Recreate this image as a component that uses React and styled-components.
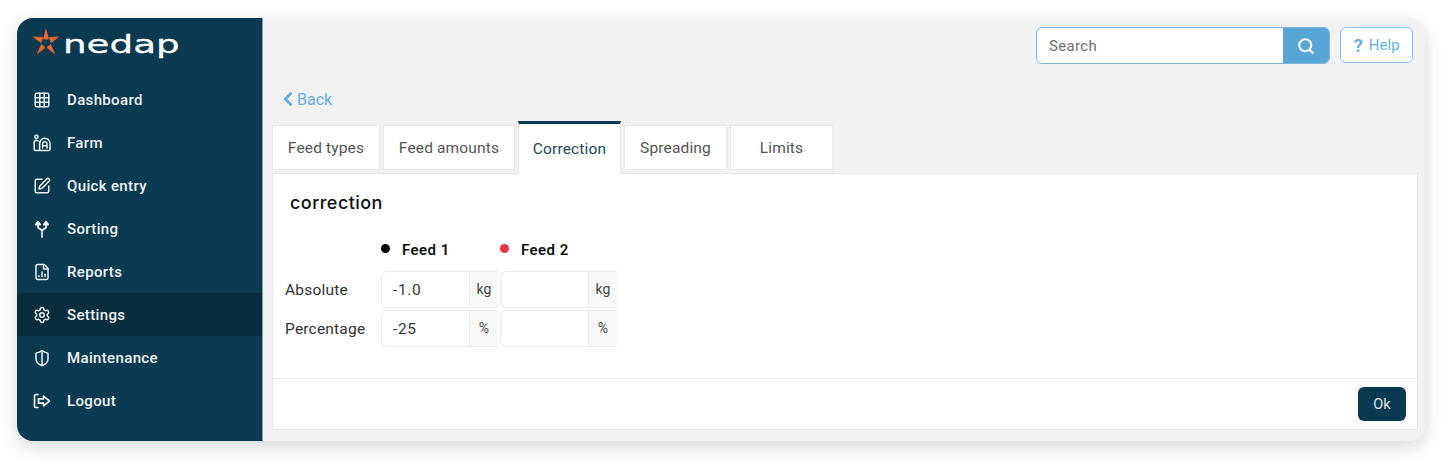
import React from 'react';
import styled, { createGlobalStyle } from 'styled-components';
import { Grid3x3, SquarePen, FileChartColumn, Settings, ShieldHalf, Search, ChevronLeft } from 'lucide-react';

const GlobalStyle = createGlobalStyle`
    html, body {
        margin: 0;
        background: #fff;
        font-family: "Roboto", "Liberation Sans", sans-serif;
    }
`;

const Page = styled.div`
    width: 1442px;
    height: 468px;
    box-sizing: border-box;
    padding: 18px 17px 27px;
`;

const Window = styled.div`
    display: flex;
    height: 100%;
    border-radius: 16px;
    overflow: hidden;
    background: #f2f2f2;
    box-shadow: 0 6px 18px rgba(0, 0, 0, 0.16);
`;

const Sidebar = styled.nav`
    width: 245px;
    flex: none;
    background: #0a3a4f;
    border-right: 1px solid #8b9aa6;
`;

const LogoRow = styled.div`
    display: flex;
    align-items: flex-start;
    height: 60px;
    box-sizing: border-box;
    padding: 11px 0 0 16px;
    gap: 4px;
`;

const Wordmark = styled.span`
    display: inline-block;
    font-family: "DejaVu Sans", sans-serif;
    font-weight: 400;
    font-size: 25.5px;
    line-height: 30px;
    color: #fff;
    -webkit-text-stroke: 0.3px #fff;
    transform: scaleX(1.46);
    transform-origin: left center;
`;

const NavItem = styled.a`
    display: flex;
    align-items: center;
    height: 43px;
    box-sizing: border-box;
    padding: 1.5px 0 0 16px;
    gap: 16px;
    color: #eef3f5;
    font-size: 15px;
    font-weight: 500;
    letter-spacing: 0.35px;
    background: ${props => (props.$active ? '#082d3d' : 'transparent')};
`;

const NavIcon = styled.span`
    display: flex;
    justify-content: center;
    width: 18px;
    margin-top: -1px;
`;

const Main = styled.main`
    flex: 1;
    min-width: 0;
    display: flex;
    flex-direction: column;
    padding: 9px 7px 11px 9px;
`;

const TopBar = styled.div`
    display: flex;
    justify-content: flex-end;
    gap: 10px;
    padding-right: 5px;
`;

const SearchBox = styled.div`
    display: flex;
    width: 294px;
    height: 37px;
    box-sizing: border-box;
    border: 1px solid #7db4dc;
    border-radius: 6px;
    overflow: hidden;
    background: #fff;
`;

const SearchInput = styled.div`
    flex: 1;
    padding-left: 12px;
    font-size: 15px;
    line-height: 36px;
    letter-spacing: 0.35px;
    color: #6e6e6e;
`;

const SearchButton = styled.div`
    width: 46px;
    display: flex;
    align-items: center;
    justify-content: center;
    background: #58a5d8;
    color: #fff;
`;

const HelpButton = styled.div`
    width: 73px;
    height: 36px;
    box-sizing: border-box;
    display: flex;
    align-items: center;
    justify-content: center;
    gap: 6px;
    border: 1px solid #8cbde0;
    border-radius: 6px;
    background: #fff;
    color: #6aaede;
    font-size: 15px;
`;

const HelpMark = styled.span`
    font-weight: 700;
    font-size: 19px;
`;

const BackLink = styled.a`
    display: flex;
    align-items: center;
    gap: 0;
    margin: 24px 0 0 5px;
    height: 22px;
    color: #6aaede;
    font-size: 16px;
`;

const BackLabel = styled.span`
    margin-left: -2px;
`;

const Tabs = styled.div`
    display: flex;
    align-items: flex-end;
    gap: 3px;
    margin-top: 11px;
    height: 53px;
    position: relative;
    z-index: 1;
    margin-bottom: -1px;
`;

const Tab = styled.div`
    box-sizing: border-box;
    width: ${props => props.$width}px;
    display: flex;
    align-items: center;
    justify-content: center;
    background: #fff;
    font-size: 15.5px;
    letter-spacing: 0.15px;
    height: ${props => (props.$active ? '53px' : '45px')};
    margin-bottom: ${props => (props.$active ? '0' : '4px')};
    color: ${props => (props.$active ? '#24475a' : '#555')};
    border: 1px solid #e9e9e9;
    border-top: ${props => (props.$active ? '3px solid #0a3a4f' : '1px solid #e9e9e9')};
    border-bottom: ${props => (props.$active ? 'none' : '1px solid #e9e9e9')};
`;

const Panel = styled.section`
    flex: 1;
    display: flex;
    flex-direction: column;
    background: #fff;
    border: 1px solid #e6e6e6;
`;

const PanelBody = styled.div`
    flex: 1;
    padding: 18px 12px 0;
`;

const Heading = styled.h2`
    margin: 0 0 0 5px;
    font-family: "Inter", sans-serif;
    font-size: 18px;
    line-height: 22px;
    font-weight: 500;
    letter-spacing: 0.45px;
    color: #111;
`;

const FieldGrid = styled.div`
    display: grid;
    grid-template-columns: 94px 117px 117px;
    column-gap: 2px;
    row-gap: 2px;
    margin-top: 25px;
    width: max-content;
    align-items: center;
`;

const FeedHead = styled.div`
    display: flex;
    align-items: center;
    gap: 12px;
    height: 22px;
    margin-bottom: 8px;
    color: #111;
    font-size: 15px;
    font-weight: 600;
    letter-spacing: 0.45px;
`;

const Dot = styled.span`
    width: 9px;
    height: 9px;
    border-radius: 50%;
    margin-top: -4px;
    background: ${props => props.$color};
`;

const RowLabel = styled.div`
    font-size: 15.5px;
    letter-spacing: 0.2px;
    color: #333;
`;

const InputGroup = styled.div`
    display: flex;
    height: 37px;
    box-sizing: border-box;
    border: 1px solid #e8ecef;
    border-right: none;
    border-radius: 6px 0 0 6px;
    overflow: hidden;
`;

const InputValue = styled.div`
    flex: 1;
    padding-left: 11px;
    line-height: 37px;
    font-size: 15.5px;
    letter-spacing: 0.6px;
    color: #333;
`;

const Addon = styled.div`
    width: 29px;
    box-sizing: border-box;
    border-left: 1px solid #e8ecef;
    background: #f8f8f8;
    text-align: center;
    line-height: 35px;
    font-size: 14px;
    color: #444;
`;

const Footer = styled.div`
    display: flex;
    justify-content: flex-end;
    height: 51px;
    box-sizing: border-box;
    padding: 8px 11px 0 0;
    border-top: 1px solid #e6e6e6;
`;

const OkButton = styled.button`
    width: 48px;
    height: 34px;
    border: none;
    border-radius: 6px;
    background: #0a3a4f;
    color: #dfe7ea;
    font-family: inherit;
    font-size: 14.5px;
`;

const FarmIcon = () => (
    <svg width="18" height="18" viewBox="0 0 18 18" fill="none" stroke="currentColor" strokeWidth="1.5" strokeLinecap="round" strokeLinejoin="round">
        <circle cx="3.4" cy="2.8" r="1.6" />
        <path d="M1.200 7.400V15.400a1 1 0 0 0 1 1h3.400M1.200 7.400c1-1 2.800-1.200 4-.4" />
        <path d="M6.600 16.400h9.200a1.200 1.200 0 0 0 1.200-1.200V9.400a5.200 5.200 0 0 0-10.400 0v7z" />
        <path d="M9.600 14V10a2.200 2.200 0 0 1 4.400 0v4M9.600 11.800H14" />
    </svg>
);

const SortingIcon = () => (
    <svg width="18" height="18" viewBox="0 0 18 18" fill="none" stroke="currentColor" strokeWidth="1.7" strokeLinecap="round" strokeLinejoin="round">
        <path d="M9 17V10.500L5 7.500V3.500M9 10.500l4-3V3.500" />
        <path d="M2.800 4.600 5 1.600l2.200 3zM10.800 4.600l2.200-3 2.200 3z" fill="currentColor" />
    </svg>
);

const LogoutIcon = () => (
    <svg width="18" height="18" viewBox="0 0 18 18" fill="none" stroke="currentColor" strokeWidth="1.7" strokeLinecap="round" strokeLinejoin="round">
        <path d="M5 2.500H3a1.500 1.500 0 0 0-1.500 1.500v10A1.500 1.500 0 0 0 3 15.500h2" />
        <path d="M5.500 6.800h5V4.200L16.500 9l-6 4.800v-2.600h-5z" />
    </svg>
);

const StarLogo = () => (
    <svg width="26" height="25" viewBox="0 0 26 25" fill="#f06a30" stroke="#f06a30" strokeWidth="0.8" strokeLinejoin="round">
        <polygon points="13,0.500 15.500,10 10.500,10" />
        <polygon points="0.500,8 9.500,8.500 8,13.500" />
        <polygon points="25.500,8 16.500,8.500 18,13.500" />
        <polygon points="4.500,24.500 8.500,15.500 12,18.500" />
        <polygon points="21.500,24.500 17.500,15.500 14,18.500" />
    </svg>
);

const navItems = [
    { label: 'Dashboard', icon: <Grid3x3 size={18} strokeWidth={2} /> },
    { label: 'Farm', icon: <FarmIcon /> },
    { label: 'Quick entry', icon: <SquarePen size={18} strokeWidth={2} /> },
    { label: 'Sorting', icon: <SortingIcon /> },
    { label: 'Reports', icon: <FileChartColumn size={18} strokeWidth={2} /> },
    { label: 'Settings', icon: <Settings size={18} strokeWidth={2} />, active: true },
    { label: 'Maintenance', icon: <ShieldHalf size={18} strokeWidth={2} /> },
    { label: 'Logout', icon: <LogoutIcon /> }
];

const tabs = [
    { label: 'Feed types', width: 108 },
    { label: 'Feed amounts', width: 132 },
    { label: 'Correction', width: 103, active: true },
    { label: 'Spreading', width: 103 },
    { label: 'Limits', width: 103 }
];

const rows = [
    { label: 'Absolute', unit: 'kg', value: '-1.0' },
    { label: 'Percentage', unit: '%', value: '-25' }
];

const App = () => (
    <Page>
        <GlobalStyle />
        <Window>
            <Sidebar>
                <LogoRow>
                    <StarLogo />
                    <Wordmark>nedap</Wordmark>
                </LogoRow>
                {navItems.map(item => (
                    <NavItem key={item.label} $active={item.active}>
                        <NavIcon>{item.icon}</NavIcon>
                        {item.label}
                    </NavItem>
                ))}
            </Sidebar>
            <Main>
                <TopBar>
                    <SearchBox>
                        <SearchInput>Search</SearchInput>
                        <SearchButton><Search size={18} strokeWidth={2.8} /></SearchButton>
                    </SearchBox>
                    <HelpButton><HelpMark>?</HelpMark>Help</HelpButton>
                </TopBar>
                <BackLink>
                    <ChevronLeft size={22} strokeWidth={3} />
                    <BackLabel>Back</BackLabel>
                </BackLink>
                <Tabs>
                    {tabs.map(tab => (
                        <Tab key={tab.label} $width={tab.width} $active={tab.active}>{tab.label}</Tab>
                    ))}
                </Tabs>
                <Panel>
                    <PanelBody>
                        <Heading>correction</Heading>
                        <FieldGrid>
                            <div />
                            <FeedHead><Dot $color="#000" />Feed 1</FeedHead>
                            <FeedHead><Dot $color="#e4344e" />Feed 2</FeedHead>
                            {rows.map(row => (
                                <React.Fragment key={row.label}>
                                    <RowLabel>{row.label}</RowLabel>
                                    <InputGroup>
                                        <InputValue>{row.value}</InputValue>
                                        <Addon>{row.unit}</Addon>
                                    </InputGroup>
                                    <InputGroup>
                                        <InputValue />
                                        <Addon>{row.unit}</Addon>
                                    </InputGroup>
                                </React.Fragment>
                            ))}
                        </FieldGrid>
                    </PanelBody>
                    <Footer><OkButton>Ok</OkButton></Footer>
                </Panel>
            </Main>
        </Window>
    </Page>
);

export default App;
